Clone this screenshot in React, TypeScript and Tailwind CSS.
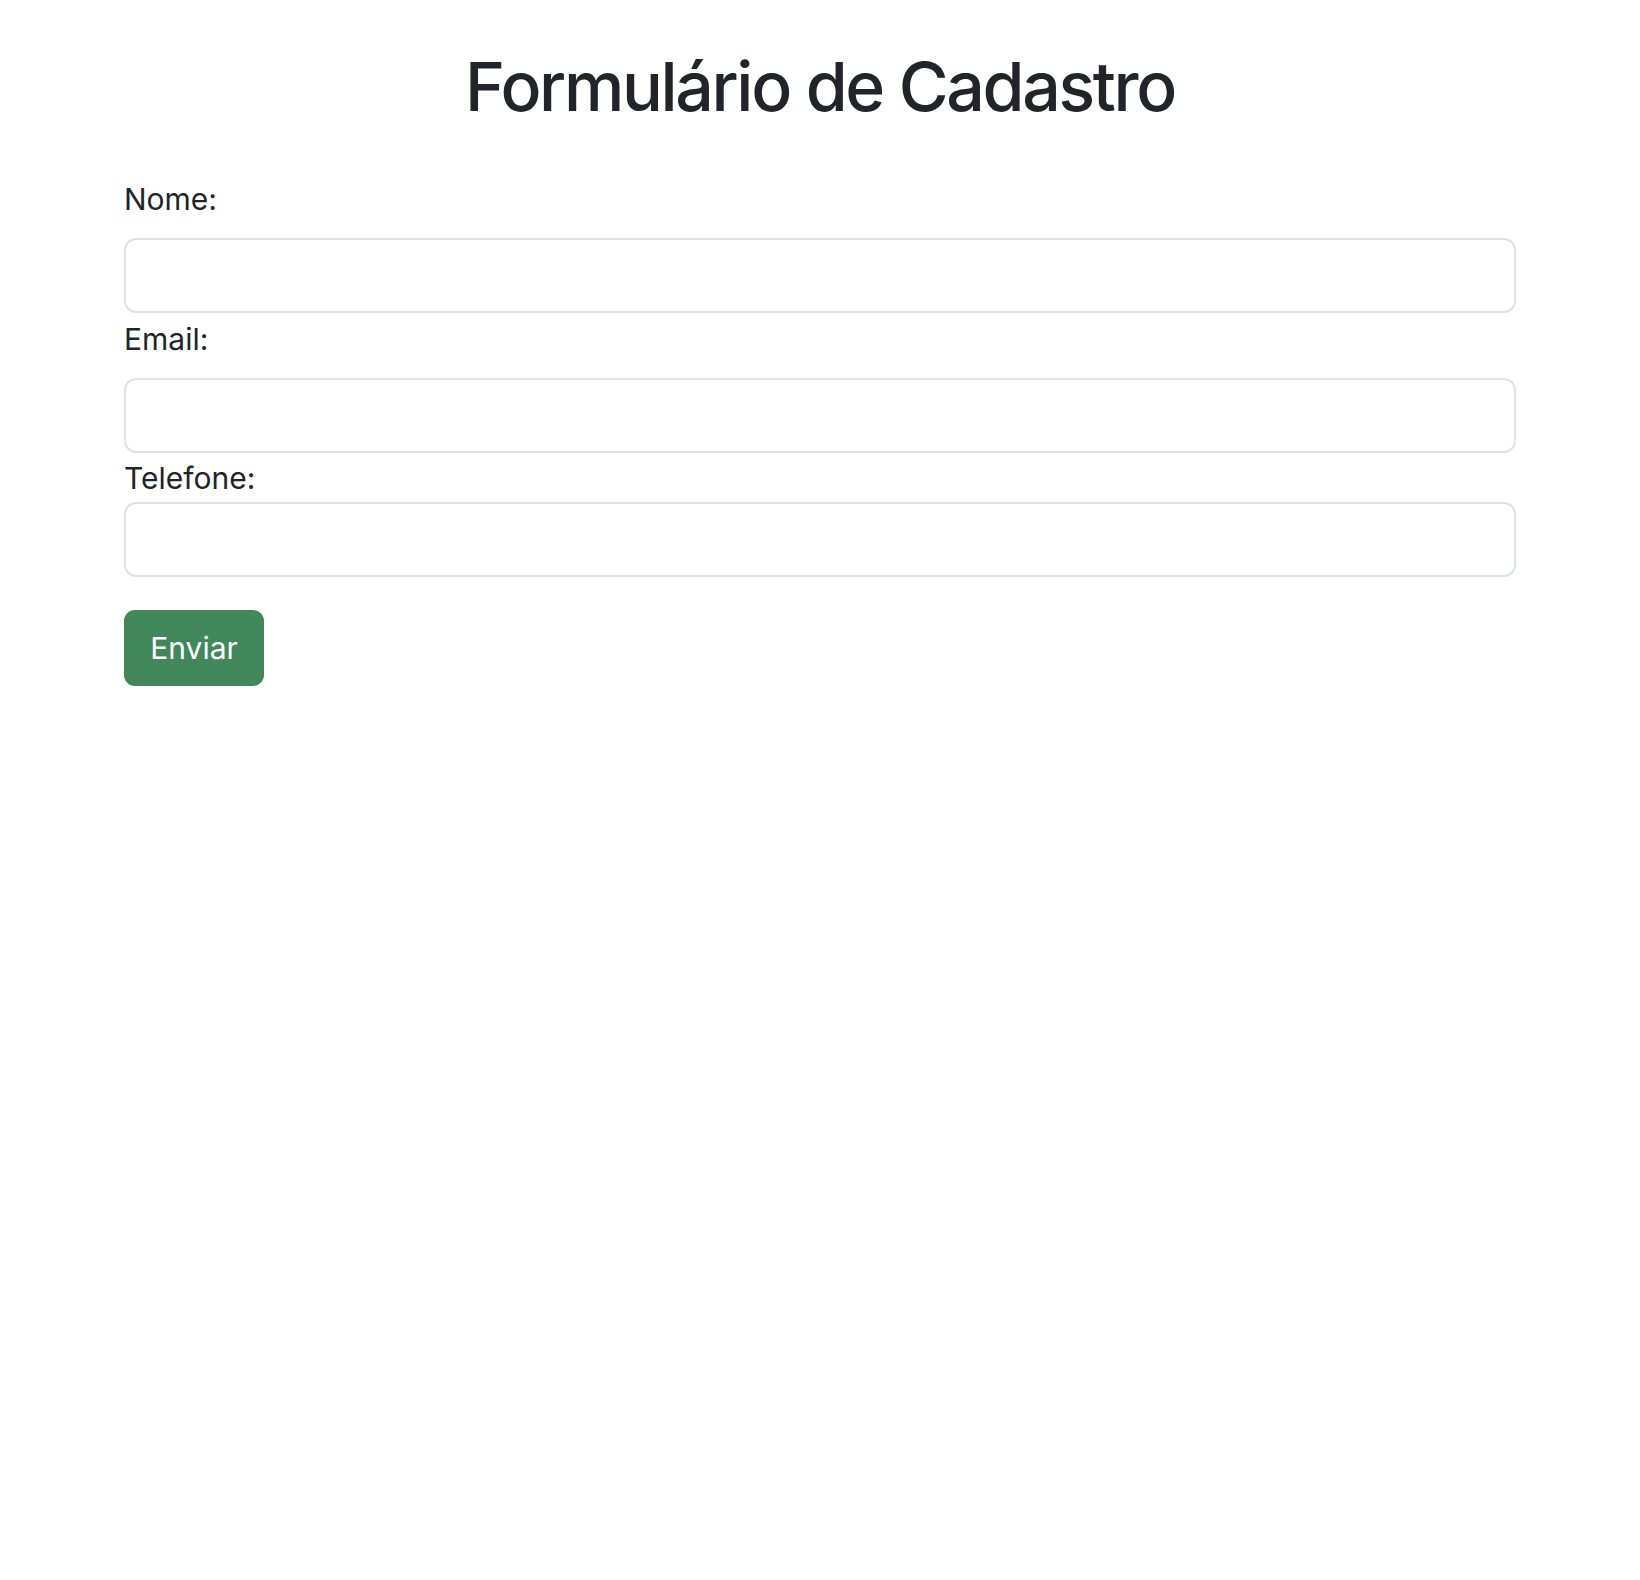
import React from 'react';

const Field: React.FC<{ label: string; id: string; type?: string; labelClass?: string }> = ({
  label,
  id,
  type = 'text',
  labelClass = '',
}) => (
  <>
    <label htmlFor={id} className={`block text-[30px] leading-[45px] text-[#212529] ${labelClass}`}>
      {label}
    </label>
    <input
      id={id}
      type={type}
      className="block w-full h-[75px] rounded-[12px] border-2 border-[#dee2e6] bg-white px-6 text-[30px] outline-none"
    />
  </>
);

const App: React.FC = () => {
  return (
    <div className="min-h-[1580px] bg-white px-[124px] font-['Inter',_'Noto_Sans',_sans-serif] text-[#212529]">
      {/* Title */}
      <h1 className="pt-[45px] text-center text-[68px] leading-[82px] font-medium tracking-[-2.35px]">
        Formulário de Cadastro
      </h1>

      {/* Form */}
      <form className="mt-[50px]" onSubmit={(e) => e.preventDefault()}>
        <Field label="Nome:" id="nome" labelClass="mb-[16px]" />
        <Field label="Email:" id="email" type="email" labelClass="mt-[4px] mb-[16px]" />
        <Field label="Telefone:" id="telefone" type="tel" labelClass="mt-[3px] mb-[1px]" />
        <button
          type="submit"
          className="mt-[33px] h-[76px] w-[140px] rounded-[11px] bg-[#41875a] text-[30px] text-white"
        >
          Enviar
        </button>
      </form>
    </div>
  );
};

export default App;
